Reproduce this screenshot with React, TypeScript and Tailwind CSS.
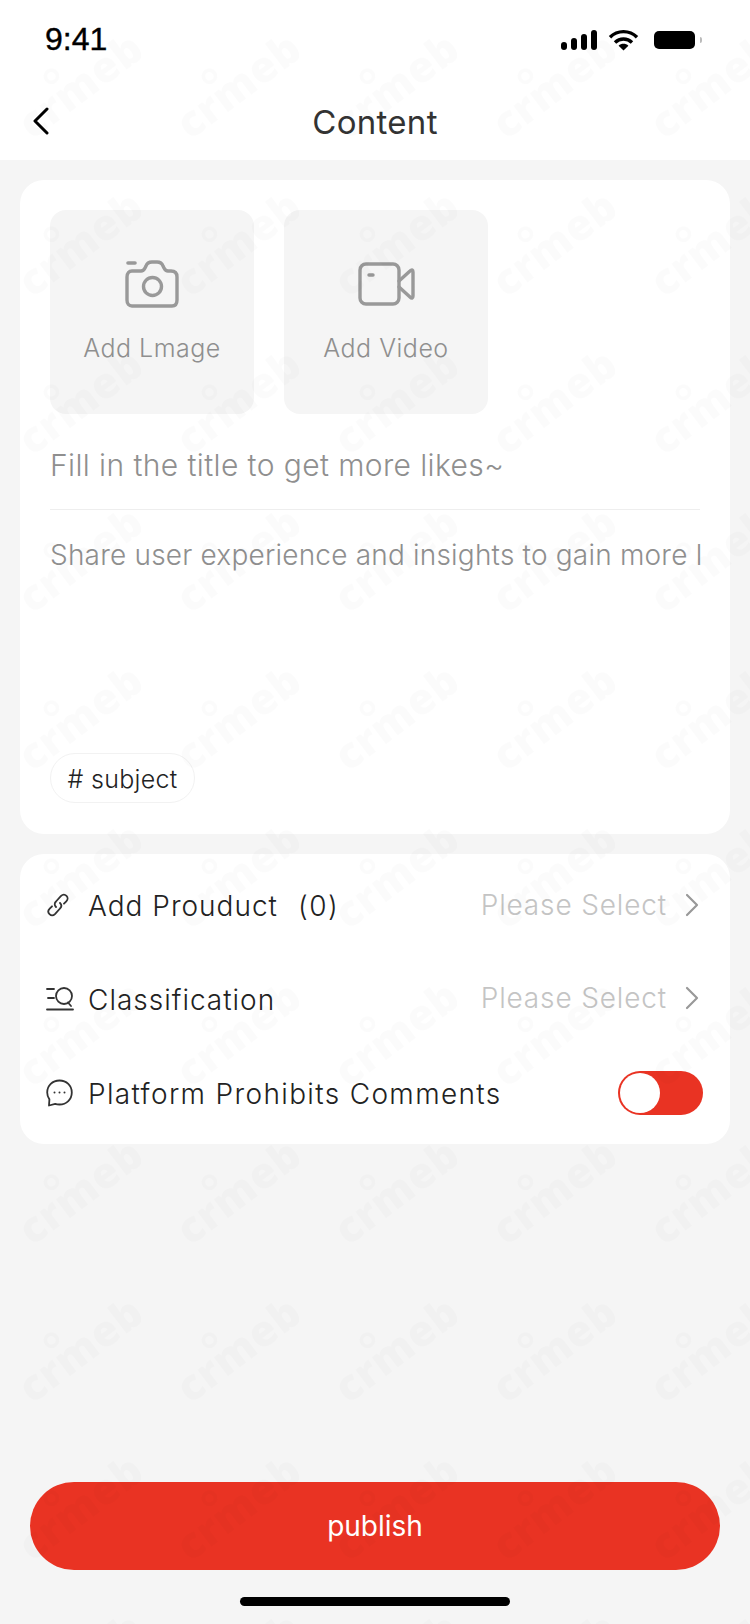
const cells = Array.from({ length: 55 });

function Watermark() {
  return (
    <div className="absolute inset-0 z-10 overflow-hidden pointer-events-none blur-[0.6px]">
      <div className="grid grid-cols-[repeat(5,158px)] auto-rows-[158px] pl-px pt-[5px]">
        {cells.map((_, i) => (
          <div key={i} className="flex items-center justify-center">
            <div className="relative -rotate-[37deg] font-['Open_Sans',sans-serif] font-extrabold text-[43px] leading-none tracking-[0.5px] text-black/[0.016]">
              crmeb
              <span className="absolute left-[46px] -top-[10px] w-[16px] h-[16px] rounded-full border-[4px] border-black/[0.016]" />
            </div>
          </div>
        ))}
      </div>
    </div>
  );
}

function StatusBar() {
  return (
    <div className="h-[80px] pl-[45px] pr-[48px] pt-[21px] flex justify-between items-start bg-white">
      <span className="text-[32px] leading-[37px] text-black font-['Liberation_Sans',sans-serif] [-webkit-text-stroke:0.4px_black]">9:41</span>
      <div className="flex items-center gap-[10px] pt-[8px]">
        <svg width="37" height="20" viewBox="0 0 37 20" fill="#000">
          <rect x="0" y="12" width="6" height="8" rx="3" />
          <rect x="10" y="8" width="6" height="12" rx="3" />
          <rect x="20" y="4" width="6" height="16" rx="3" />
          <rect x="30" y="0" width="6" height="20" rx="3" />
        </svg>
        <svg width="31" height="22" viewBox="0 0 31 22" fill="none" stroke="#000" strokeWidth="3.4">
          <path d="M2 8.2C9.5 .8 21.5 .8 29 8.2" />
          <path d="M7 13.5C11.8 8.8 19.2 8.8 24 13.5" />
          <path d="M15.5 21.5 10.6 16.8C13.3 14.2 17.7 14.2 20.4 16.8Z" fill="#000" stroke="none" />
        </svg>
        <div className="flex items-center gap-[5px] ml-[5px]">
          <div className="w-[41px] h-[18px] rounded-[5px] bg-black" />
          <div className="w-[2px] h-[6px] rounded-r-full bg-[#bbbbbb]" />
        </div>
      </div>
    </div>
  );
}

function Header() {
  return (
    <div className="h-[80px] relative flex items-center justify-center bg-white">
      <svg className="absolute left-[32px] top-[27px]" width="17" height="28" viewBox="0 0 17 28" fill="none" stroke="#000" strokeWidth="3" strokeLinecap="round" strokeLinejoin="round">
        <path d="M15 2 3 14 15 26" />
      </svg>
      <span className="pt-[4px] text-[33px] leading-none text-[#333333] tracking-[0.3px]">Content</span>
    </div>
  );
}

function CameraIcon() {
  return (
    <svg width="56" height="48" viewBox="0 0 56 48" fill="none" stroke="#999999" strokeWidth="3.4" strokeLinecap="round" strokeLinejoin="round">
      <path d="M3 17c0-4 2-6 5-6h9c2 0 3-1 4-3l1-2c1-3 3-4 6-4h5c3 0 5 1 6 4l1 2c1 2 2 3 4 3h3c4 0 6 2 6 6v23c0 4-2 6-5 6H8c-3 0-5-2-5-6V17Z" />
      <circle cx="28.500" cy="26.500" r="9" />
      <path d="M4 3h7" strokeWidth="3.600" />
    </svg>
  );
}

function VideoIcon() {
  return (
    <svg width="57" height="44" viewBox="0 0 57 44" fill="none" stroke="#999999" strokeWidth="3.4" strokeLinecap="round" strokeLinejoin="round">
      <rect x="2" y="2" width="39" height="40" rx="6" />
      <path d="M41 19 52 9c2-2 3-1 3 1v24c0 2-1 3-3 1L41 25" />
      <path d="M11 13h4" />
    </svg>
  );
}

function LinkIcon() {
  return (
    <svg width="24" height="24" viewBox="0 0 24 24" fill="none" stroke="#333333" strokeWidth="1.800" strokeLinecap="round">
      <path d="M10 14c-1.700-1.700-1.700-3.800 0-5.500l4.800-5.300c1.800-1.800 4.200-1.800 5.700-.3s1.500 3.800-.2 5.500l-2.300 2.300" />
      <path d="M14 10c1.700 1.700 1.700 3.800 0 5.500l-4.800 5.300c-1.800 1.800-4.200 1.800-5.700.3s-1.500-3.800.2-5.500l2.300-2.300" />
    </svg>
  );
}

function ClassifyIcon() {
  return (
    <svg width="28" height="24" viewBox="0 0 28 24" fill="none" stroke="#333333" strokeWidth="1.800" strokeLinecap="round">
      <path d="M1 2h7M2 11h6M1 22.500h26" />
      <circle cx="18" cy="9" r="8" />
      <path d="M22 15.500 25 19" />
    </svg>
  );
}

function CommentIcon() {
  return (
    <svg width="27" height="28" viewBox="0 0 27 28" fill="none" stroke="#333333" strokeWidth="1.800" strokeLinejoin="round">
      <path d="M13.500 1.500C6.500 1.500 1.200 6.700 1.200 13.500c0 2.600.8 5 2.200 6.900L3 26.500l6.200-1.700c1.300.5 2.800.7 4.300.7 7 0 12.300-5.200 12.300-12S20.500 1.500 13.500 1.500Z" />
      <circle cx="8.500" cy="13.500" r="1" fill="#333333" stroke="none" />
      <circle cx="13.500" cy="13.500" r="1" fill="#333333" stroke="none" />
      <circle cx="18.500" cy="13.500" r="1" fill="#333333" stroke="none" />
    </svg>
  );
}

function Chevron() {
  return (
    <svg width="14" height="24" viewBox="0 0 14 24" fill="none" stroke="#999999" strokeWidth="2.200" strokeLinecap="round" strokeLinejoin="round">
      <path d="M2 2 12 12 2 22" />
    </svg>
  );
}

function UploadTile({ icon, label }: { icon: React.ReactNode; label: string }) {
  return (
    <div className="w-[204px] h-[204px] rounded-[16px] bg-[#f5f5f5] flex flex-col items-center pt-[50px]">
      <div className="h-[48px] flex items-center">{icon}</div>
      <span className="mt-[25px] text-[25px] leading-[30px] font-light text-[#8f8f8f] tracking-[0.5px]">{label}</span>
    </div>
  );
}

function SelectRow({ icon, label, shift }: { icon: React.ReactNode; label: React.ReactNode; shift: string }) {
  return (
    <div className="h-[94px] flex items-center justify-between">
      <div className="flex items-center">
        <div className="w-[42px] flex items-center">{icon}</div>
        <span className="pt-[2px] text-[28px] leading-none font-light text-[#222222] tracking-[1px]">{label}</span>
      </div>
      <div className={`flex items-center gap-[18px] pr-[5px] ${shift}`}>
        <span className="text-[28px] leading-none font-light text-[#c4c4c4] tracking-[0.85px]">Please Select</span>
        <Chevron />
      </div>
    </div>
  );
}

export default function App() {
  return (
    <div className="relative w-[750px] h-[1624px] overflow-hidden bg-[#f5f5f5] flex flex-col font-['Inter',sans-serif]">
      <StatusBar />
      <Header />

      <div className="mx-[20px] mt-[20px] h-[654px] rounded-[24px] bg-white px-[30px] pt-[30px] flex flex-col">
        <div className="flex gap-[30px]">
          <UploadTile icon={<CameraIcon />} label="Add Lmage" />
          <UploadTile icon={<VideoIcon />} label="Add Video" />
        </div>
        <div className="h-[96px] pt-[7px] flex items-center border-b border-[#eeeeee] text-[30px] leading-none font-light text-[#8f8f8f] tracking-[0.4px]">
          Fill in the title to get more likes~
        </div>
        <div className="mt-[30px] w-[654px] h-[34px] overflow-hidden whitespace-nowrap text-[28px] leading-[30px] font-light text-[#8f8f8f] tracking-[0.2px]">
          Share user experience and insights to gain more likes
        </div>
        <div className="mt-auto mb-[31px] w-[145px] h-[50px] rounded-full border border-[#f2f2f2] flex items-center justify-center text-[25px] leading-none pt-[2px] font-light text-[#222222] tracking-[0.3px]">
          # subject
        </div>
      </div>

      <div className="mx-[20px] mt-[20px] h-[290px] rounded-[24px] bg-white px-[26px] pt-[4px]">
        <SelectRow
          icon={<LinkIcon />}
          label={
            <>
              Add Prouduct<span className="ml-[20px] tracking-[1.5px]">(0)</span>
            </>
          }
          shift=""
        />
        <SelectRow icon={<ClassifyIcon />} label="Classification" shift="-translate-y-[1px]" />
        <div className="h-[94px] flex items-center justify-between">
          <div className="flex items-center">
            <div className="w-[42px] flex items-center">
              <CommentIcon />
            </div>
            <span className="pt-[2px] text-[28px] leading-none font-light text-[#222222] tracking-[1.35px]">Platform Prohibits Comments</span>
          </div>
          <div className="w-[85px] h-[44px] mr-[1px] rounded-full bg-[#e93323] p-[2px]">
            <div className="w-[40px] h-[40px] rounded-full bg-white" />
          </div>
        </div>
      </div>

      <div className="mt-auto mx-[30px] mb-[54px] h-[88px] rounded-full bg-[#e93323] flex items-center justify-center text-[28px] leading-none text-white">
        publish
      </div>
      <div className="absolute left-[240px] bottom-[18px] w-[270px] h-[9px] rounded-full bg-black" />

      <Watermark />
    </div>
  );
}
